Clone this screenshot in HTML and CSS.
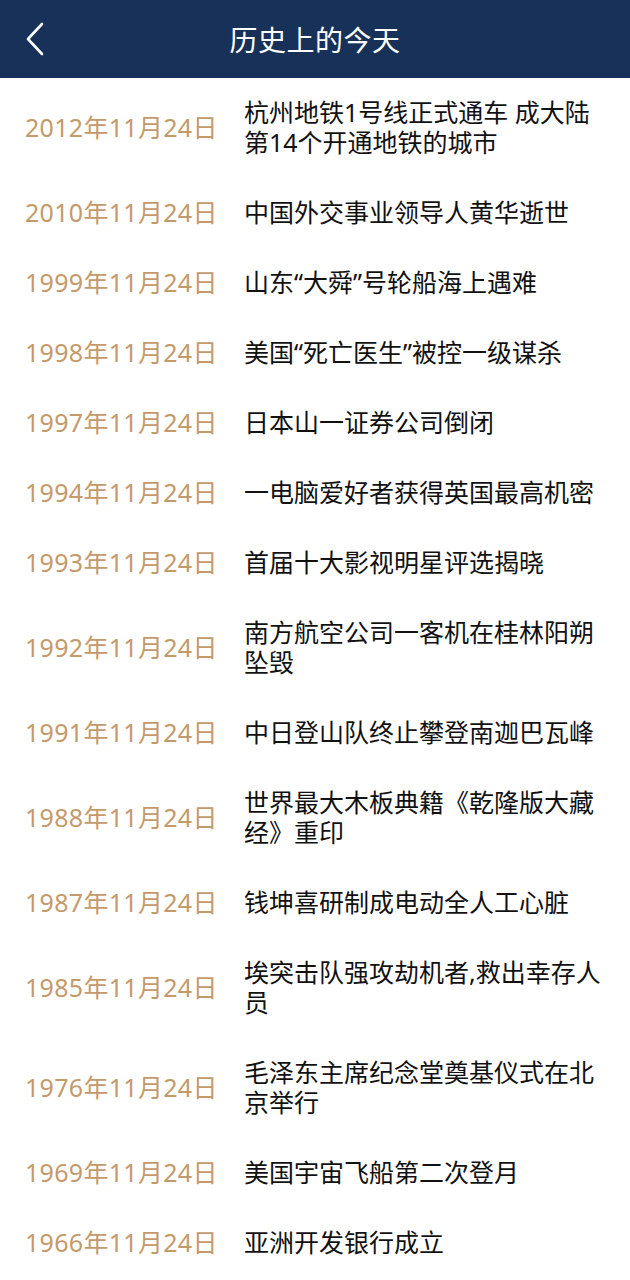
FILE: index.html
```html
<!DOCTYPE html>
<html lang="zh-CN">
<head>
  <meta charset="UTF-8" />
  <meta name="viewport" content="width=device-width, initial-scale=1.0"/>
  <title>历史上的今天</title>
  <link rel="stylesheet" href="styles.css">
</head>
<body>

  <!-- Top bar -->
  <header class="topbar">
    <a class="back" href="#">
      <svg width="22" height="36" viewBox="0 0 22 36">
        <polyline points="18,3 4,18 18,33" fill="none" stroke="#fff" stroke-width="2.6" stroke-linecap="round" stroke-linejoin="round"/>
      </svg>
    </a>
    <h1 class="title">历史上的今天</h1>
  </header>

  <!-- Event list -->
  <ul class="events">
    <li class="event"><span class="date">2012年11月24日</span><span class="text">杭州地铁1号线正式通车 成大陆第14个开通地铁的城市</span></li>
    <li class="event"><span class="date">2010年11月24日</span><span class="text">中国外交事业领导人黄华逝世</span></li>
    <li class="event"><span class="date">1999年11月24日</span><span class="text">山东“大舜”号轮船海上遇难</span></li>
    <li class="event"><span class="date">1998年11月24日</span><span class="text">美国“死亡医生”被控一级谋杀</span></li>
    <li class="event"><span class="date">1997年11月24日</span><span class="text">日本山一证券公司倒闭</span></li>
    <li class="event"><span class="date">1994年11月24日</span><span class="text">一电脑爱好者获得英国最高机密</span></li>
    <li class="event"><span class="date">1993年11月24日</span><span class="text">首届十大影视明星评选揭晓</span></li>
    <li class="event"><span class="date">1992年11月24日</span><span class="text">南方航空公司一客机在桂林阳朔坠毁</span></li>
    <li class="event"><span class="date">1991年11月24日</span><span class="text">中日登山队终止攀登南迦巴瓦峰</span></li>
    <li class="event"><span class="date">1988年11月24日</span><span class="text">世界最大木板典籍《乾隆版大藏经》重印</span></li>
    <li class="event"><span class="date">1987年11月24日</span><span class="text">钱坤喜研制成电动全人工心脏</span></li>
    <li class="event"><span class="date">1985年11月24日</span><span class="text">埃突击队强攻劫机者,救出幸存人员</span></li>
    <li class="event"><span class="date">1976年11月24日</span><span class="text">毛泽东主席纪念堂奠基仪式在北京举行</span></li>
    <li class="event"><span class="date">1969年11月24日</span><span class="text">美国宇宙飞船第二次登月</span></li>
    <li class="event"><span class="date">1966年11月24日</span><span class="text">亚洲开发银行成立</span></li>
  </ul>

</body>
</html>
```

FILE: styles.css
```css
* {
  box-sizing: border-box;
  margin: 0;
  padding: 0;
}

body {
  font-family: "Noto Sans", "Noto Sans CJK SC", sans-serif;
  background: #fff;
  color: #111;
}

.topbar {
  position: relative;
  height: 78px;
  background: #183158;
  display: flex;
  align-items: center;
  justify-content: center;
}

.back {
  position: absolute;
  left: 24px;
  top: 21px;
  display: block;
  line-height: 0;
}

.title {
  color: #fff;
  font-size: 28px;
  font-weight: 400;
  letter-spacing: 0.5px;
}

.events {
  list-style: none;
}

.event {
  display: flex;
  align-items: center;
  padding: 19px 20px 21px 25px;
  font-size: 25px;
  line-height: 30px;
}

.date {
  flex: 0 0 219px;
  color: #c49a6a;
  letter-spacing: 0.3px;
}

.text {
  flex: 0 0 366px;
  color: #111;
}
```
